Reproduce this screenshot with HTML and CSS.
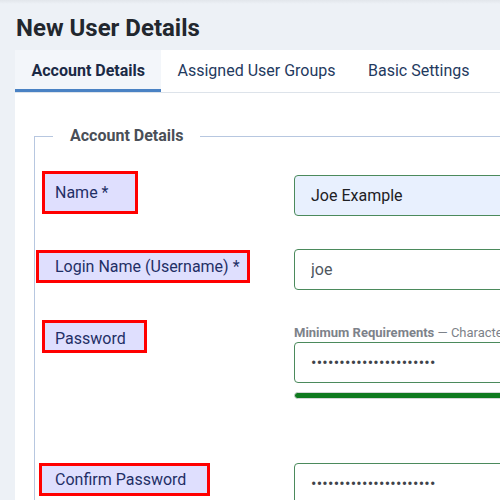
FILE: index.html
```html
<!DOCTYPE html>
<html lang="en">
<head>
<meta charset="utf-8">
<title>New User Details</title>
<link rel="stylesheet" href="styles.css">
</head>
<body>
<div class="page">
  <h1 class="title">New User Details</h1>
  <div class="card">
    <div class="tabs">
      <button class="tab active" type="button">Account Details</button>
      <button class="tab" type="button">Assigned User Groups</button>
      <button class="tab" type="button">Basic Settings</button>
    </div>
    <div class="panel">
      <fieldset class="fs">
        <legend class="legend">Account Details</legend>
        <div class="row row-name">
          <div class="label-col"><label class="lbl lbl-name" for="name">Name *</label></div>
          <div class="ctrl ctrl-name"><input id="name" class="field autofill" type="text" value="Joe Example"></div>
        </div>
        <div class="row row-login">
          <div class="label-col"><label class="lbl lbl-login" for="login">Login Name (Username) *</label></div>
          <div class="ctrl"><input id="login" class="field field-muted" type="text" value="joe"></div>
        </div>
        <div class="row row-pass">
          <div class="label-col"><label class="lbl lbl-pass" for="pass">Password</label></div>
          <div class="ctrl">
            <div class="hint"><strong>Minimum Requirements</strong> — Characters</div>
            <input id="pass" class="field field-dots" type="password" value="aaaaaaaaaaaaaaaaaaaaaa">
            <div class="meter"></div>
          </div>
        </div>
        <div class="row row-confirm">
          <div class="label-col"><label class="lbl lbl-confirm" for="confirm">Confirm Password</label></div>
          <div class="ctrl"><input id="confirm" class="field field-dots" type="password" value="aaaaaaaaaaaaaaaaaaaaaa"></div>
        </div>
      </fieldset>
    </div>
  </div>
</div>
</body>
</html>
```

FILE: styles.css
```css
html, body {
  margin: 0;
  padding: 0;
}
body {
  width: 500px;
  height: 500px;
  overflow: hidden;
  background: linear-gradient(#e2e6eb 0, #edf1f6 4px, #edf1f6 100%);
  font-family: Roboto, "Liberation Sans", sans-serif;
}
.page {
  width: 700px;
}
.title {
  margin: 13px 0 7px 16px;
  font-size: 24px;
  line-height: 30px;
  font-weight: 700;
  color: #22272e;
}
.card {
  margin-left: 15px;
  background: #fff;
  height: 520px;
}
.tabs {
  display: flex;
  height: 42px;
  border-bottom: 1px solid #dde3ea;
}
.tab {
  box-sizing: border-box;
  height: 42px;
  padding: 3px 16px 0 16.5px;
  border: 0;
  border-bottom: 3px solid transparent;
  background: transparent;
  font-family: Roboto, "Liberation Sans", sans-serif;
  font-size: 16px;
  line-height: 36px;
  color: #1f3a60;
  cursor: pointer;
}
.tab.active {
  background: #f3f6fa;
  border-bottom-color: #4a82c4;
  font-weight: 700;
  color: #1b2a45;
}
.panel {
  padding: 31px 0 0 19px;
}
.fs {
  margin: 0;
  width: 640px;
  min-width: 0;
  padding: 23px 0 0 1px;
  border: 1px solid #b7c7e0;
}
.legend {
  margin-left: 17px;
  padding: 0 17px;
  font-size: 16px;
  line-height: 24px;
  font-weight: 700;
  color: #4a4f57;
}
.row {
  display: flex;
  align-items: flex-start;
}
.row-name { margin-bottom: 33px; }
.row-login { margin-bottom: 30px; }
.row-pass { margin-bottom: 64px; }
.label-col {
  flex: none;
  width: 258px;
}
.ctrl {
  flex: none;
  width: 320px;
}
.ctrl-name { padding-top: 4px; }
.row-login .lbl { margin-top: 1px; }
.lbl {
  box-sizing: border-box;
  display: flex;
  align-items: center;
  height: 33px;
  border: 3px solid #ff0000;
  background: #dfdffe;
  font-size: 16px;
  color: #1f2f66;
}
.lbl-name {
  margin-left: 6px;
  width: 96px;
  height: 43px;
  padding-left: 10px;
}
.lbl-login {
  width: 214px;
  padding-left: 16px;
}
.lbl-pass {
  margin-left: 6px;
  width: 105px;
  padding-left: 10px;
  padding-top: 3px;
}
.lbl-confirm {
  margin-left: 3px;
  width: 171px;
  padding-left: 13px;
}
.field {
  box-sizing: border-box;
  display: block;
  width: 100%;
  height: 41px;
  margin: 0;
  padding: 0 16px;
  border: 1px solid #4b8a5c;
  border-radius: 4px;
  background: #fff;
  font-family: Roboto, "Liberation Sans", sans-serif;
  font-size: 16px;
  color: #1e2125;
  outline: none;
}
.autofill {
  background: #e8f0fe;
}
.field-muted {
  color: #50575f;
}
.field-dots {
  color: #3d434a;
  letter-spacing: 0.27px;
}
.hint {
  margin-top: 5px;
  margin-bottom: 1px;
  height: 16px;
  font-size: 13px;
  line-height: 16px;
  color: #7d828a;
  white-space: nowrap;
}
.hint strong {
  font-weight: 700;
}
.meter {
  box-sizing: border-box;
  margin-top: 9px;
  height: 7px;
  border: 1px solid #d4d6d8;
  border-radius: 4px;
  background: #0f7a1f;
}
```
